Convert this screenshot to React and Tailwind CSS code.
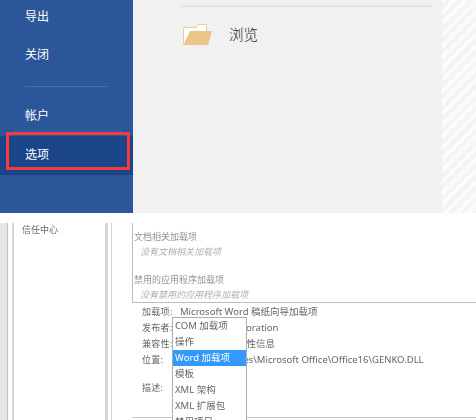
const stack = { fontFamily: '"Noto Sans", "Noto Sans CJK SC", "Liberation Sans", sans-serif' };

const details = [
  { label: '加载项:', value: 'Microsoft Word 稿纸向导加载项' },
  { label: '发布者:', value: 'Microsoft Corporation' },
  { label: '兼容性:', value: '没有可用的兼容性信息' },
  { label: '位置:', value: 'C:\\Program Files\\Microsoft Office\\Office16\\GENKO.DLL' },
];

const addinTypes = ['COM 加载项', '操作', 'Word 加载项', '模板', 'XML 架构', 'XML 扩展包', '禁用项目'];

function FolderIcon() {
  return (
    <svg width="29" height="21" viewBox="0 0 29 21" className="block">
      <path d="M0.5 21V3.5H13L15 0.5H23.5V8" fill="#fff" stroke="#eccb94" />
      <path d="M7 7H29L25 21H0.5Z" fill="#ebc687" />
    </svg>
  );
}

function Backstage() {
  return (
    <div className="flex h-[213px] overflow-hidden">
      <aside className="w-[133px] shrink-0 bg-[#2b579a] text-[12px] text-white">
        <div className="flex h-[30px] items-center pl-[25px] pt-[3px]">导出</div>
        <div className="mt-[5px] flex h-[38px] items-center pl-[25px] pt-[2px]">关闭</div>
        <div className="ml-[25px] mt-[13px] h-px w-[82px] bg-[#4a70b4]" />
        <div className="mt-[9px] flex h-[38px] items-center pl-[25px] pt-[2px]">帐户</div>
        <div className="relative mt-[2px] flex h-[39px] items-center bg-[#1a4588] pb-px pl-[25px]">
          选项
          <div className="absolute left-[6px] top-[-4px] h-[38px] w-[124px] border-[3px] border-[#f83a3f]" />
        </div>
      </aside>
      <main className="w-[309px] shrink-0 bg-[#f1f1f1] pl-[48px]">
        <div className="mt-[5px] h-[2px] w-[251px] bg-[#e4e4e4]" />
        <div className="ml-[2px] mt-[17px] flex items-center gap-[17px]">
          <FolderIcon />
          <span className="text-[14.5px] font-light leading-[21px] text-[#222]">浏览</span>
        </div>
      </main>
      <div className="flex-1 bg-[repeating-linear-gradient(-45deg,#f4f4f4_0,#f4f4f4_4px,#fbfbfb_4px,#fbfbfb_8px)]" />
    </div>
  );
}

function AddinDialog() {
  return (
    <div className="flex h-[207px] overflow-hidden bg-white pt-[10px] text-[9px] leading-[14px] text-[#666] blur-[0.5px]">
      <div className="w-[8px] shrink-0 border-r border-[#a9c4d6] bg-[#e6e6e6]" />
      <div className="ml-[4px] w-[96px] shrink-0 border-l-2 border-r-[3px] border-[#d6d6d6] pl-[8px]">信任中心</div>
      <div className="relative ml-[3px] flex-1 border-l border-[#d8d8d8]">
        <div className="ml-[20px] h-[80px] border-b border-l border-[#bdbdbd] pl-px pt-[7px] text-[#949494]">
          <div>文档相关加载项</div>
          <div className="mt-px pl-[6px] italic text-[#b0b0b0]">没有文档相关加载项</div>
          <div className="mt-[14px]">禁用的应用程序加载项</div>
          <div className="mt-px pl-[6px] italic text-[#b0b0b0]">没有禁用的应用程序加载项</div>
        </div>
        <div className="ml-[30px] mt-px">
          {details.map((row) => (
            <div key={row.label} className="flex h-[16px] items-center whitespace-nowrap">
              <span className="w-[38px] shrink-0 tracking-[0.3px]">{row.label}</span>
              <span className="text-[9.5px]">{row.value}</span>
            </div>
          ))}
          <div className="mt-[12px] flex h-[16px] items-center tracking-[0.3px]">描述:</div>
        </div>
        <div className="ml-[20px] mt-[21px] h-px bg-[#c4c4c4]" />
        <ul className="absolute left-[60px] top-[94px] w-[75px] border border-[#a9aeb8] bg-white text-[9.5px]">
          {addinTypes.map((name) => (
            <li
              key={name}
              className={
                name === 'Word 加载项'
                  ? 'flex h-[16px] items-center bg-[#3399ff] pl-[2px] text-white'
                  : 'flex h-[16px] items-center pl-[2px]'
              }
            >
              {name}
            </li>
          ))}
        </ul>
      </div>
    </div>
  );
}

export default function App() {
  return (
    <div className="h-[420px] w-[476px] overflow-hidden bg-white" style={stack}>
      <Backstage />
      <AddinDialog />
    </div>
  );
}
